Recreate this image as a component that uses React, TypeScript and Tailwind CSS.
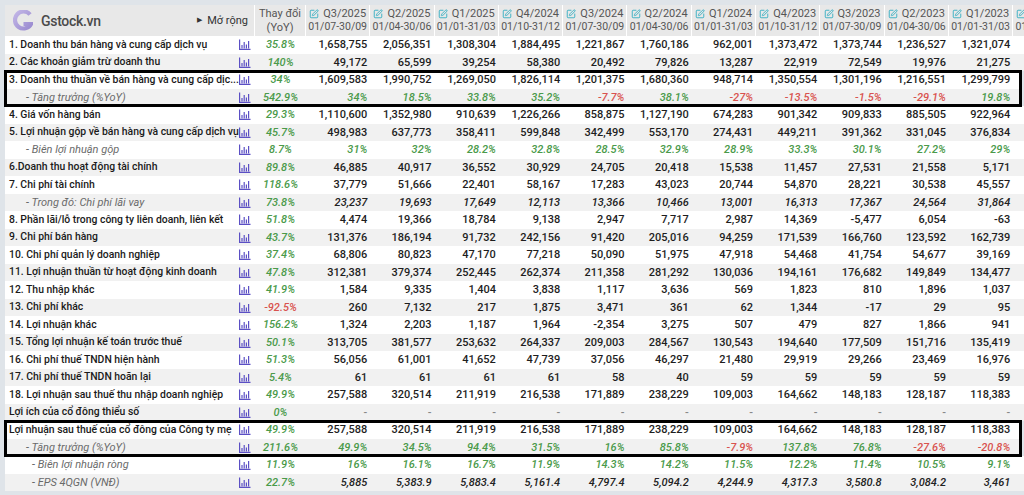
import React from "react";
import { SquarePen } from "lucide-react";

type Kind = "main" | "growth" | "green" | "italic" | "dash";

interface RowData {
  label: string;
  yoy: string;
  values: string[];
  kind: Kind;
  sub?: boolean;
  indent?: boolean;
}

const quarters = [
  ["Q3/2025", "01/07-30/09"],
  ["Q2/2025", "01/04-30/06"],
  ["Q1/2025", "01/01-31/03"],
  ["Q4/2024", "01/10-31/12"],
  ["Q3/2024", "01/07-30/09"],
  ["Q2/2024", "01/04-30/06"],
  ["Q1/2024", "01/01-31/03"],
  ["Q4/2023", "01/10-31/12"],
  ["Q3/2023", "01/07-30/09"],
  ["Q2/2023", "01/04-30/06"],
  ["Q1/2023", "01/01-31/03"],
  ["Q4/2022", "01/10-31/12"],
];

const split = (s: string) => s.split(" ");

const rowsTop: RowData[] = [
  { label: "1. Doanh thu bán hàng và cung cấp dịch vụ", yoy: "35.8%", kind: "main", values: split("1,658,755 2,056,351 1,308,304 1,884,495 1,221,867 1,760,186 962,001 1,373,472 1,373,744 1,236,527 1,321,074") },
  { label: "2. Các khoản giảm trừ doanh thu", yoy: "140%", kind: "main", values: split("49,172 65,599 39,254 58,380 20,492 79,826 13,287 22,919 72,549 19,976 21,275") },
];

const boxA: RowData[] = [
  { label: "3. Doanh thu thuần về bán hàng và cung cấp dịc...", yoy: "34%", kind: "main", values: split("1,609,583 1,990,752 1,269,050 1,826,114 1,201,375 1,680,360 948,714 1,350,554 1,301,196 1,216,551 1,299,799") },
  { label: "- Tăng trưởng (%YoY)", yoy: "542.9%", kind: "growth", sub: true, values: split("34% 18.5% 33.8% 35.2% -7.7% 38.1% -27% -13.5% -1.5% -29.1% 19.8%") },
];

const rowsMid: RowData[] = [
  { label: "4. Giá vốn hàng bán", yoy: "29.3%", kind: "main", values: split("1,110,600 1,352,980 910,639 1,226,266 858,875 1,127,190 674,283 901,342 909,833 885,505 922,964") },
  { label: "5. Lợi nhuận gộp về bán hàng và cung cấp dịch vụ", yoy: "45.7%", kind: "main", values: split("498,983 637,773 358,411 599,848 342,499 553,170 274,431 449,211 391,362 331,045 376,834") },
  { label: "- Biên lợi nhuận gộp", yoy: "8.7%", kind: "green", sub: true, values: split("31% 32% 28.2% 32.8% 28.5% 32.9% 28.9% 33.3% 30.1% 27.2% 29%") },
  { label: "6.Doanh thu hoạt động tài chính", yoy: "89.8%", kind: "main", values: split("46,885 40,917 36,552 30,929 24,705 20,418 15,538 11,457 27,531 21,558 5,171") },
  { label: "7. Chi phí tài chính", yoy: "118.6%", kind: "main", values: split("37,779 51,666 22,401 58,167 17,283 43,023 20,744 54,870 28,221 30,538 45,557") },
  { label: "- Trong đó: Chi phí lãi vay", yoy: "73.8%", kind: "italic", sub: true, values: split("23,237 19,693 17,649 12,113 13,366 10,466 13,001 16,313 17,367 24,564 31,864") },
  { label: "8. Phần lãi/lỗ trong công ty liên doanh, liên kết", yoy: "51.8%", kind: "main", values: split("4,474 19,366 18,784 9,138 2,947 7,717 2,987 14,369 -5,477 6,054 -63") },
  { label: "9. Chi phí bán hàng", yoy: "43.7%", kind: "main", values: split("131,376 186,194 91,732 242,156 91,420 205,016 94,259 171,539 166,760 123,592 162,739") },
  { label: "10. Chi phí quản lý doanh nghiệp", yoy: "37.4%", kind: "main", values: split("68,806 80,823 47,170 77,218 50,090 51,975 47,918 54,468 41,754 54,677 39,169") },
  { label: "11. Lợi nhuận thuần từ hoạt động kinh doanh", yoy: "47.8%", kind: "main", values: split("312,381 379,374 252,445 262,374 211,358 281,292 130,036 194,161 176,682 149,849 134,477") },
  { label: "12. Thu nhập khác", yoy: "41.9%", kind: "main", values: split("1,584 9,335 1,404 3,838 1,117 3,636 569 1,823 810 1,896 1,037") },
  { label: "13. Chi phí khác", yoy: "-92.5%", kind: "main", values: split("260 7,132 217 1,875 3,471 361 62 1,344 -17 29 95") },
  { label: "14. Lợi nhuận khác", yoy: "156.2%", kind: "main", values: split("1,324 2,203 1,187 1,964 -2,354 3,275 507 479 827 1,866 941") },
  { label: "15. Tổng lợi nhuận kế toán trước thuế", yoy: "50.1%", kind: "main", values: split("313,705 381,577 253,632 264,337 209,003 284,567 130,543 194,640 177,509 151,716 135,419") },
  { label: "16. Chi phí thuế TNDN hiện hành", yoy: "51.3%", kind: "main", values: split("56,056 61,001 41,652 47,739 37,056 46,297 21,480 29,919 29,266 23,469 16,976") },
  { label: "17. Chi phí thuế TNDN hoãn lại", yoy: "5.4%", kind: "main", values: split("61 61 61 61 58 40 59 59 59 59 59") },
  { label: "18. Lợi nhuận sau thuế thu nhập doanh nghiệp", yoy: "49.9%", kind: "main", values: split("257,588 320,514 211,919 216,538 171,889 238,229 109,003 164,662 148,183 128,187 118,383") },
  { label: "Lợi ích của cổ đông thiểu số", yoy: "0%", kind: "dash", values: split("- - - - - - - - - - -") },
];

const boxB: RowData[] = [
  { label: "Lợi nhuận sau thuế của cổ đông của Công ty mẹ", yoy: "49.9%", kind: "main", values: split("257,588 320,514 211,919 216,538 171,889 238,229 109,003 164,662 148,183 128,187 118,383") },
  { label: "- Tăng trưởng (%YoY)", yoy: "211.6%", kind: "growth", sub: true, values: split("49.9% 34.5% 94.4% 31.5% 16% 85.8% -7.9% 137.8% 76.8% -27.6% -20.8%") },
];

const rowsBottom: RowData[] = [
  { label: "- Biên lợi nhuận ròng", yoy: "11.9%", kind: "green", sub: true, indent: true, values: split("16% 16.1% 16.7% 11.9% 14.3% 14.2% 11.5% 12.2% 11.4% 10.5% 9.1%") },
  { label: "- EPS 4QGN (VNĐ)", yoy: "22.7%", kind: "italic", sub: true, indent: true, values: split("5,885 5,383.9 5,883.4 5,161.4 4,797.4 5,094.2 4,244.9 4,317.3 3,580.8 3,084.2 3,461") },
];

const ChartIcon = () => (
  <svg width="12" height="11" viewBox="0 0 12 11" fill="none" stroke="#5b4fc4" strokeWidth="1.2">
    <path d="M0.6 0.5 V10.4 H11.5" />
    <path d="M3 9.5 V6" />
    <path d="M5.2 9.5 V3" />
    <path d="M7.4 9.5 V5.5" />
    <path d="M9.6 9.5 V2" />
  </svg>
);

const Logo = () => (
  <svg width="20" height="22" viewBox="0 0 20 22">
    <defs>
      <linearGradient id="g" x1="0" y1="0" x2="1" y2="1">
        <stop offset="0" stopColor="#c2b6e6" />
        <stop offset="1" stopColor="#9a8bd0" />
      </linearGradient>
    </defs>
    <path d="M17 4.5 A8.5 8.5 0 1 0 18 14 H10.5" fill="none" stroke="url(#g)" strokeWidth="4.2" />
  </svg>
);

const pct = (v: string) => (v.startsWith("-") ? "text-[#d9534f]" : "text-[#4a9a4a]");

const Row = ({ r, i }: { r: RowData; i: number }) => {
  const valueClass = (v: string) => {
    if (r.kind === "growth") return `italic ${pct(v)}`;
    if (r.kind === "green") return "italic text-[#4a9a4a]";
    if (r.kind === "italic") return "italic text-[#222]";
    if (r.kind === "dash") return "text-[#888]";
    return "text-[#1e1e1e]";
  };
  return (
    <div
      className={`grid h-[17.5px] grid-cols-[228px_22px_51px_repeat(11,64.3px)_64px] items-center ${
        i % 2 === 1 ? "bg-[#f1f1f1]" : "bg-white"
      }`}
    >
      <div
        className={`whitespace-nowrap ${
          r.sub
            ? `text-[11px] italic font-normal text-[#6a6a6a] ${r.indent ? "pl-[27px]" : "pl-[21px]"}`
            : "pl-[4px] text-[10.4px] text-[#1a1a1a]"
        }`}
      >
        {r.label}
      </div>
      <div className="flex justify-center pl-[1px]">
        <ChartIcon />
      </div>
      <div className={`text-center italic ${pct(r.yoy)}`}>{r.yoy}</div>
      {r.values.map((v, k) => (
        <div key={k} className={`pr-[3px] text-right ${valueClass(v)}`}>
          {v}
        </div>
      ))}
      <div />
    </div>
  );
};

export default function App() {
  let idx = 0;
  const render = (list: RowData[]) => list.map((r) => <Row key={idx} r={r} i={idx++} />);

  return (
    <div className="h-[495px] w-[1024px] overflow-hidden bg-[#dfe4e9] pl-[5px] pt-[5px] font-['Roboto',sans-serif] text-[11px] font-medium leading-none">
      <div className="w-[1019px]">
        {/* header */}
        <div className="grid h-[31px] grid-cols-[250px_51px_repeat(11,64.3px)_64px] bg-[#e8e8e8] font-normal text-[#555]">
          <div className="flex items-center border-r border-white pl-[8px] pr-[6px]">
            <Logo />
            <span className="ml-[8px] text-[14px] font-medium tracking-[-0.3px] text-[#4b4b4b]">Gstock.vn</span>
            <span className="ml-auto flex items-center gap-[5px] text-[11px] text-[#333]">
              <span className="text-[7px]">▶</span>
              Mở rộng
            </span>
          </div>
          <div className="flex flex-col items-center justify-center gap-[3px] border-r border-white text-[11px] leading-none">
            <span>Thay đổi</span>
            <span>(YoY)</span>
          </div>
          {quarters.map(([q, d]) => (
            <div
              key={q}
              className="flex flex-col items-center justify-center gap-[3px] whitespace-nowrap border-r border-white text-[10.5px] leading-none"
            >
              <span className="flex items-center gap-[4px] text-[11px]">
                <SquarePen size={10} color="#35aec2" strokeWidth={2.2} />
                {q}
              </span>
              <span>{d}</span>
            </div>
          ))}
        </div>

        {render(rowsTop)}
        <div className="relative z-10 w-[1016px] outline-[3px] outline-offset-[-2px] outline-black outline-solid">
          {render(boxA)}
        </div>
        {render(rowsMid)}
        <div className="relative z-10 w-[1016px] outline-[3px] outline-offset-[-2px] outline-black outline-solid">
          {render(boxB)}
        </div>
        {render(rowsBottom)}
      </div>
    </div>
  );
}
